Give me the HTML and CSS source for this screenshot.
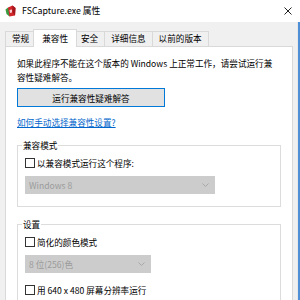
FILE: index.html
```html
<!DOCTYPE html>
<html lang="zh-CN">
<head>
<meta charset="utf-8">
<title>FSCapture.exe 属性</title>
<link rel="stylesheet" href="styles.css">
</head>
<body>
<div class="window">
  <header class="titlebar">
    <svg class="app-icon" viewBox="0 0 11 12" aria-hidden="true">
      <path d="M3 2.5 L7.5 0.5 L10.5 3 L10 10.5 L4.5 11.5 L2.5 8 Z" fill="#d3262b"/>
      <path d="M7.5 0.5 L10.5 3 L10 10.5 L7.5 7 Z" fill="#a3161c"/>
      <path d="M0.5 4.5 L3 2.5 L4.5 11.5 L1.5 9 Z" fill="#3c9a3f"/>
      <path d="M4.5 5 L7 4.5 L7 7.5 L5 8 Z" fill="#f6d0d0"/>
    </svg>
    <span class="title">FSCapture.exe 属性</span>
    <svg class="close" viewBox="0 0 8 8" aria-hidden="true">
      <path d="M0.5 0.5 L7.5 7.5 M7.5 0.5 L0.5 7.5" stroke="#222" stroke-width="1" fill="none"/>
    </svg>
  </header>
  <div class="frame">
    <div class="client">
      <nav class="tabs">
        <span class="tab">常规</span>
        <span class="tab active">兼容性</span>
        <span class="tab">安全</span>
        <span class="tab">详细信息</span>
        <span class="tab">以前的版本</span>
      </nav>
      <section class="panel">
        <p class="intro">如果此程序不能在这个版本的 Windows 上正常工作，请尝试运行兼容性疑难解答。</p>
        <button class="btn" type="button">运行兼容性疑难解答</button>
        <a class="link" href="#">如何手动选择兼容性设置?</a>
        <fieldset class="group">
          <legend>兼容模式</legend>
          <label class="check"><span class="box"></span>以兼容模式运行这个程序:</label>
          <div class="select select-wide">
            <span>Windows 8</span>
            <svg class="chev" viewBox="0 0 7 4" aria-hidden="true"><path d="M0.5 0.5 L3.5 3.5 L6.5 0.5" stroke="#a8a8a8" fill="none"/></svg>
          </div>
        </fieldset>
        <fieldset class="group">
          <legend>设置</legend>
          <label class="check"><span class="box"></span>简化的颜色模式</label>
          <div class="select select-narrow">
            <span>8 位(256)色</span>
            <svg class="chev" viewBox="0 0 7 4" aria-hidden="true"><path d="M0.5 0.5 L3.5 3.5 L6.5 0.5" stroke="#a8a8a8" fill="none"/></svg>
          </div>
          <label class="check spaced"><span class="box"></span>用 640 x 480 屏幕分辨率运行</label>
        </fieldset>
      </section>
    </div>
    <div class="edge"></div>
  </div>
</div>
</body>
</html>
```

FILE: styles.css
```css
* { box-sizing: border-box; }

html, body { margin: 0; padding: 0; }

body {
  width: 300px;
  height: 300px;
  overflow: hidden;
  background: #f0f0f0;
  font-family: "Noto Sans CJK SC", "Noto Sans", sans-serif;
  font-size: 8.6px;
  line-height: 14px;
  color: #000;
}

.window {
  display: flex;
  flex-direction: column;
  height: 300px;
}

.titlebar {
  height: 22px;
  flex: none;
  background: #fff;
  display: flex;
  align-items: center;
  padding: 0 8px 0 5px;
}

.app-icon {
  width: 11px;
  height: 12px;
  margin-right: 6px;
}

.title {
  flex: 1;
  font-size: 8.8px;
}

.close {
  width: 8px;
  height: 8px;
}

.frame {
  flex: 1;
  display: flex;
  min-height: 0;
}

.client {
  flex: 1;
  min-width: 0;
  display: flex;
  flex-direction: column;
  padding: 9px 4px 0 5px;
}

.edge {
  width: 3px;
  border-left: 1px solid #e8e8e8;
  background: #4f8fd6;
}

.tabs {
  display: flex;
  align-items: flex-end;
  height: 15px;
  flex: none;
}

.tab {
  height: 15px;
  padding: 0 6px;
  border: 1px solid #d9d9d9;
  border-bottom: 0;
  margin-right: -1px;
  line-height: 13px;
  background: #f0f0f0;
  white-space: nowrap;
}

.tab.active {
  position: relative;
  z-index: 1;
  height: 18px;
  margin: 0 -3px -1px -2px;
  padding: 0 8px;
  line-height: 16px;
  background: #fff;
}

.panel {
  flex: 1;
  background: #fff;
  border: 1px solid #d9d9d9;
  padding: 9px 11px 0;
  display: flex;
  flex-direction: column;
  align-items: flex-start;
}

.intro {
  margin: 0;
  width: 100%;
  padding-right: 5px;
}

.btn {
  margin-top: 4px;
  width: 148px;
  height: 19px;
  padding: 0;
  border: 1px solid #0078d7;
  background: #e1e1e1;
  font: inherit;
  color: #000;
}

.link {
  display: block;
  margin-top: 8px;
  color: #0066cc;
  text-decoration: underline;
}

.group {
  align-self: stretch;
  min-width: 0;
  margin: 10px 0 0;
  padding: 5px 7px 12px;
  border: 1px solid #dcdcdc;
}

.group + .group {
  margin-top: 11px;
}

.group legend {
  padding: 0 1px;
  margin-left: -3px;
  line-height: 12px;
}

.check {
  display: flex;
  align-items: center;
  height: 14px;
}

.check.spaced {
  margin-top: 10px;
}

.box {
  width: 10px;
  height: 10px;
  border: 1px solid #333;
  background: #fff;
  margin-right: 2px;
}

.select {
  margin-top: 6px;
  height: 18px;
  display: flex;
  align-items: center;
  justify-content: space-between;
  padding: 0 5px 0 3px;
  background: #cccccc;
  border: 1px solid #cccccc;
  color: #9b9b9b;
}

.select-wide { width: 190px; }
.select-narrow { width: 126px; }

.chev {
  width: 7px;
  height: 4px;
}
```
